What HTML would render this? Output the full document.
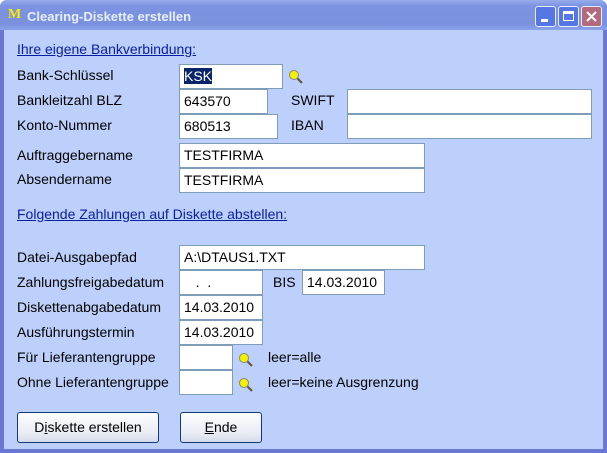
<!DOCTYPE html>
<html><head><meta charset="utf-8"><style>
*{margin:0;padding:0;box-sizing:border-box}
body{width:607px;height:453px;overflow:hidden;background:#fff;font-family:"Liberation Sans",Arial,sans-serif;font-size:14px;color:#000}
.win{position:absolute;left:0;top:0;width:607px;height:453px;background:#6b78d2;border-radius:7px 7px 0 0}
.title{position:absolute;left:0;top:0;width:607px;height:30px;border-radius:7px 7px 0 0;background:linear-gradient(#97acec 0,#7b93e0 20%,#7a92de 80%,#8aa3e8 100%)}
.title .t{position:absolute;left:27px;top:9px;color:#e8eeff;font-weight:bold;font-size:13px}
.title .m{position:absolute;left:8px;top:7px;color:#ffe800;font-weight:bold;font-family:"Liberation Serif",serif;font-size:14px}
.btn{position:absolute;top:6px;width:21px;height:21px;border:1px solid #e8eeff;border-radius:3px;background:#5577e4}
.client{position:absolute;left:4px;top:30px;width:599px;height:419px;background:#bdd0fb}
.l{position:absolute;left:17px;white-space:nowrap}
.h{color:#0a1ea0;text-decoration:underline}
.i{position:absolute;height:25px;background:#fff;border:1px solid #7f9db9;padding:3px 0 0 4px;white-space:nowrap}
.b{position:absolute;height:31px;border:1px solid #0f3a78;border-radius:3px;background:linear-gradient(#fdfdff,#e9ecf5 70%,#d6dbe9);text-align:center;line-height:29px;font-size:14px}
.mag{position:absolute;width:16px;height:16px}
</style></head><body>
<div class="win"></div>
<div class="title"><span class="m">M</span><span class="t">Clearing-Diskette erstellen</span>
<div class="btn" style="left:535px"><div style="position:absolute;left:5px;top:12px;width:7px;height:3px;background:#fff"></div></div>
<div class="btn" style="left:558px"><div style="position:absolute;left:4px;top:4px;width:11px;height:10px;border:1px solid #fff;border-top-width:3px"></div></div>
<div class="btn" style="left:581px;background:#b46a7c"><svg width="19" height="19" style="position:absolute;left:0;top:0"><path d="M5 5L14 14M14 5L5 14" stroke="#fff" stroke-width="2"/></svg></div>
</div>
<div class="client"></div>
<div class="l h" style="top:41px">Ihre eigene Bankverbindung:</div>
<div class="l" style="top:67px">Bank-Schlüssel</div>
<div class="i" style="left:179px;top:64px;width:104px"><span style="background:#0a246a;color:#fff">KSK</span></div>
<svg class="mag" style="left:288px;top:69px" viewBox="0 0 16 16"><circle cx="6" cy="6" r="4.5" fill="#f4f000" stroke="#887"/><path d="M9.5 9.5L14 14" stroke="#654" stroke-width="2.2"/></svg>
<div class="l" style="top:92px">Bankleitzahl BLZ</div>
<div class="i" style="left:179px;top:89px;width:89px">643570</div>
<div class="l" style="left:291px;top:92px">SWIFT</div>
<div class="i" style="left:347px;top:89px;width:245px"></div>
<div class="l" style="top:117px">Konto-Nummer</div>
<div class="i" style="left:179px;top:114px;width:99px">680513</div>
<div class="l" style="left:291px;top:117px">IBAN</div>
<div class="i" style="left:347px;top:114px;width:245px"></div>
<div class="l" style="top:147px">Auftraggebername</div>
<div class="i" style="left:179px;top:143px;width:246px">TESTFIRMA</div>
<div class="l" style="top:171px">Absendername</div>
<div class="i" style="left:179px;top:168px;width:246px">TESTFIRMA</div>
<div class="l h" style="top:206px">Folgende Zahlungen auf Diskette abstellen:</div>
<div class="l" style="top:249px">Datei-Ausgabepfad</div>
<div class="i" style="left:179px;top:245px;width:246px">A:\DTAUS1.TXT</div>
<div class="l" style="top:274px">Zahlungsfreigabedatum</div>
<div class="i" style="left:179px;top:270px;width:84px">&nbsp;&nbsp;&nbsp;.&nbsp;&nbsp;.</div>
<div class="l" style="left:273px;top:274px">BIS</div>
<div class="i" style="left:302px;top:270px;width:83px">14.03.2010</div>
<div class="l" style="top:299px">Diskettenabgabedatum</div>
<div class="i" style="left:179px;top:295px;width:84px">14.03.2010</div>
<div class="l" style="top:324px">Ausführungstermin</div>
<div class="i" style="left:179px;top:320px;width:84px">14.03.2010</div>
<div class="l" style="top:349px">Für Lieferantengruppe</div>
<div class="i" style="left:179px;top:345px;width:54px"></div>
<svg class="mag" style="left:238px;top:352px" viewBox="0 0 16 16"><circle cx="6" cy="6" r="4.5" fill="#f4f000" stroke="#887"/><path d="M9.5 9.5L14 14" stroke="#654" stroke-width="2.2"/></svg>
<div class="l" style="left:268px;top:349px">leer=alle</div>
<div class="l" style="top:374px">Ohne Lieferantengruppe</div>
<div class="i" style="left:179px;top:370px;width:54px"></div>
<svg class="mag" style="left:238px;top:377px" viewBox="0 0 16 16"><circle cx="6" cy="6" r="4.5" fill="#f4f000" stroke="#887"/><path d="M9.5 9.5L14 14" stroke="#654" stroke-width="2.2"/></svg>
<div class="l" style="left:268px;top:374px">leer=keine Ausgrenzung</div>
<div class="b" style="left:17px;top:412px;width:142px">D<u>i</u>skette erstellen</div>
<div class="b" style="left:180px;top:412px;width:82px"><u>E</u>nde</div>
</body></html>
